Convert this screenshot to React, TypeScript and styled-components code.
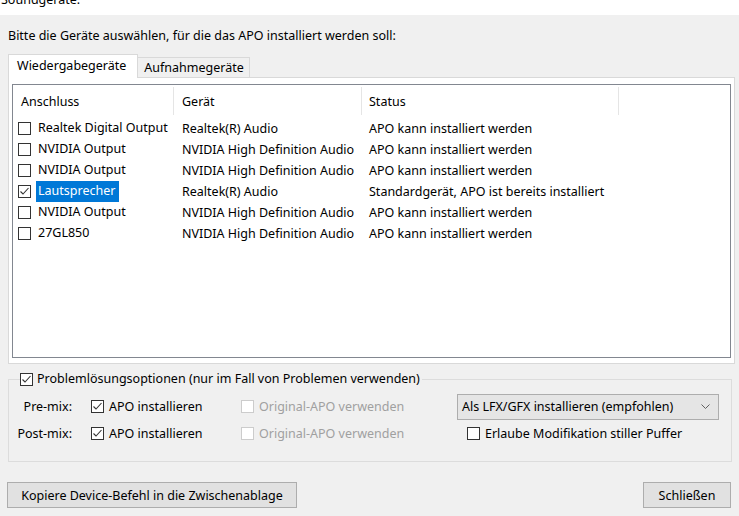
import styled, { createGlobalStyle } from 'styled-components';

const GlobalStyle = createGlobalStyle`
  html, body {
    margin: 0;
    padding: 0;
    background: #f0f0f0;
  }
  body {
    font-family: 'Noto Sans', 'Liberation Sans', sans-serif;
    font-size: 12.5px;
    color: #000;
  }
`;

const Window = styled.div`
  display: flex;
  flex-direction: column;
  width: 739px;
  height: 516px;
  overflow: hidden;
  background: #f0f0f0;
`;

const TopStrip = styled.div`
  height: 15px;
  overflow: hidden;
  background: #fff;
  line-height: 16px;
  span {
    display: block;
    margin-top: -8px;
    padding-left: 1px;
  }
`;

const Prompt = styled.div`
  margin: 13px 0 0 8px;
  line-height: 16px;
`;

const TabStrip = styled.div`
  display: flex;
  align-items: flex-end;
  height: 23px;
  margin: 10px 0 0 8px;
  position: relative;
  z-index: 1;
`;

const Tab = styled.div<{ $active?: boolean }>`
  box-sizing: border-box;
  height: ${({ $active }) => ($active ? '24px' : '20px')};
  margin-bottom: ${({ $active }) => ($active ? '-1px' : '0')};
  padding: ${({ $active }) => ($active ? '2px 11px 0 8px' : '1px 5px 0 6px')};
  border: 1px solid #d9d9d9;
  border-bottom: none;
  border-left: ${({ $active }) => ($active ? '1px solid #d9d9d9' : 'none')};
  background: ${({ $active }) => ($active ? '#fff' : '#f0f0f0')};
  line-height: 18px;
  white-space: nowrap;
`;

const TabPanel = styled.div`
  display: flex;
  box-sizing: border-box;
  width: 727px;
  height: 287px;
  margin-left: 8px;
  padding: 6px 3px 5px 3px;
  border: 1px solid #d9d9d9;
  background: #fff;
`;

const List = styled.div`
  flex: 1;
  border: 1px solid #828790;
  background: #fff;
  overflow: hidden;
`;

const HeaderRow = styled.div`
  display: grid;
  grid-template-columns: 161px 188px 257px;
  height: 33px;
  align-items: start;
`;

const HeaderCell = styled.div<{ $pad: number }>`
  height: 28px;
  margin-top: 2px;
  line-height: 30px;
  padding-left: ${({ $pad }) => $pad}px;
  border-right: 1px solid #e5e5e5;
`;

const Row = styled.div`
  display: grid;
  grid-template-columns: 161px 188px 257px;
  height: 21px;
  align-items: center;
  white-space: nowrap;
`;

const FirstCell = styled.div`
  display: flex;
  align-items: center;
  gap: 7px;
  padding-left: 5px;
`;

const Cell = styled.div<{ $pad: number }>`
  padding-left: ${({ $pad }) => $pad}px;
`;

const Selected = styled.span<{ $on?: boolean }>`
  display: inline-block;
  height: 21px;
  line-height: 20px;
  margin-left: -2px;
  padding: 0 4px 0 2px;
  background: ${({ $on }) => ($on ? '#0078d7' : 'transparent')};
  color: ${({ $on }) => ($on ? '#fff' : '#000')};
`;

const Box = styled.span<{ $disabled?: boolean }>`
  display: inline-flex;
  align-items: center;
  justify-content: center;
  box-sizing: border-box;
  width: 13px;
  height: 13px;
  flex: none;
  border: 1px solid ${({ $disabled }) => ($disabled ? '#cccccc' : '#333333')};
  background: #fff;
`;

function CheckBox({ checked, disabled }: { checked?: boolean; disabled?: boolean }) {
  return (
    <Box $disabled={disabled}>
      {checked && (
        <svg width="11" height="11" viewBox="0 0 11 11">
          <polyline points="1.5,5.5 4,8 9.5,2" fill="none" stroke="#333" strokeWidth="1.1" />
        </svg>
      )}
    </Box>
  );
}

const Group = styled.fieldset`
  box-sizing: border-box;
  width: 724px;
  margin: 7px 0 0 8px;
  padding: 0 0 14px 0;
  border: 1px solid #dcdcdc;
  min-width: 0;
`;

const Legend = styled.legend`
  display: flex;
  align-items: center;
  gap: 4px;
  margin-left: 11px;
  padding: 0 2px 0 0;
  line-height: 16px;
`;

const OptionsGrid = styled.div`
  display: grid;
  grid-template-columns: 82px 150px 216px 262px;
  grid-auto-rows: 27px;
  align-items: center;
  padding-top: 6px;
`;

const MixLabel = styled.div`
  text-align: right;
  padding-right: 19px;
  white-space: nowrap;
`;

const Option = styled.label<{ $disabled?: boolean; $pad?: number }>`
  display: flex;
  align-items: center;
  gap: 5px;
  padding-left: ${({ $pad }) => $pad ?? 0}px;
  color: ${({ $disabled }) => ($disabled ? '#a0a0a0' : '#000')};
  white-space: nowrap;
`;

const Select = styled.div`
  display: flex;
  align-items: center;
  justify-content: space-between;
  box-sizing: border-box;
  height: 26px;
  padding: 0 8px 0 4px;
  border: 1px solid #adadad;
  background: #e5e5e5;
  white-space: nowrap;
`;

const Footer = styled.div`
  display: flex;
  justify-content: space-between;
  margin: 20px 8px 0 7px;
`;

const Button = styled.button<{ $w: number }>`
  box-sizing: border-box;
  width: ${({ $w }) => $w}px;
  height: 26px;
  border: 1px solid #adadad;
  background: #e1e1e1;
  font: inherit;
  color: #000;
  padding: 0;
`;

const devices = [
  { port: 'Realtek Digital Output', device: 'Realtek(R) Audio', status: 'APO kann installiert werden' },
  { port: 'NVIDIA Output', device: 'NVIDIA High Definition Audio', status: 'APO kann installiert werden' },
  { port: 'NVIDIA Output', device: 'NVIDIA High Definition Audio', status: 'APO kann installiert werden' },
  { port: 'Lautsprecher', device: 'Realtek(R) Audio', status: 'Standardgerät, APO ist bereits installiert', on: true },
  { port: 'NVIDIA Output', device: 'NVIDIA High Definition Audio', status: 'APO kann installiert werden' },
  { port: '27GL850', device: 'NVIDIA High Definition Audio', status: 'APO kann installiert werden' },
];

export default function App() {
  return (
    <Window>
      <GlobalStyle />
      <TopStrip>
        <span>Soundgeräte:</span>
      </TopStrip>
      <Prompt>Bitte die Geräte auswählen, für die das APO installiert werden soll:</Prompt>
      <TabStrip>
        <Tab $active>Wiedergabegeräte</Tab>
        <Tab>Aufnahmegeräte</Tab>
      </TabStrip>
      <TabPanel>
        <List>
          <HeaderRow>
            <HeaderCell $pad={8}>Anschluss</HeaderCell>
            <HeaderCell $pad={8}>Gerät</HeaderCell>
            <HeaderCell $pad={7}>Status</HeaderCell>
          </HeaderRow>
          {devices.map((d, i) => (
            <Row key={i}>
              <FirstCell>
                <CheckBox checked={d.on} />
                <Selected $on={d.on}>{d.port}</Selected>
              </FirstCell>
              <Cell $pad={8}>{d.device}</Cell>
              <Cell $pad={7}>{d.status}</Cell>
            </Row>
          ))}
        </List>
      </TabPanel>
      <Group>
        <Legend>
          <CheckBox checked />
          Problemlösungsoptionen (nur im Fall von Problemen verwenden)
        </Legend>
        <OptionsGrid>
          <MixLabel>Pre-mix:</MixLabel>
          <Option>
            <CheckBox checked />
            APO installieren
          </Option>
          <Option $disabled>
            <CheckBox disabled />
            Original-APO verwenden
          </Option>
          <Select>
            Als LFX/GFX installieren (empfohlen)
            <svg width="9" height="6" viewBox="0 0 9 6">
              <polyline points="0.5,0.5 4.5,4.5 8.5,0.5" fill="none" stroke="#606060" strokeWidth="1" />
            </svg>
          </Select>
          <MixLabel>Post-mix:</MixLabel>
          <Option>
            <CheckBox checked />
            APO installieren
          </Option>
          <Option $disabled>
            <CheckBox disabled />
            Original-APO verwenden
          </Option>
          <Option $pad={10}>
            <CheckBox />
            Erlaube Modifikation stiller Puffer
          </Option>
        </OptionsGrid>
      </Group>
      <Footer>
        <Button $w={290}>Kopiere Device-Befehl in die Zwischenablage</Button>
        <Button $w={88}>Schließen</Button>
      </Footer>
    </Window>
  );
}
